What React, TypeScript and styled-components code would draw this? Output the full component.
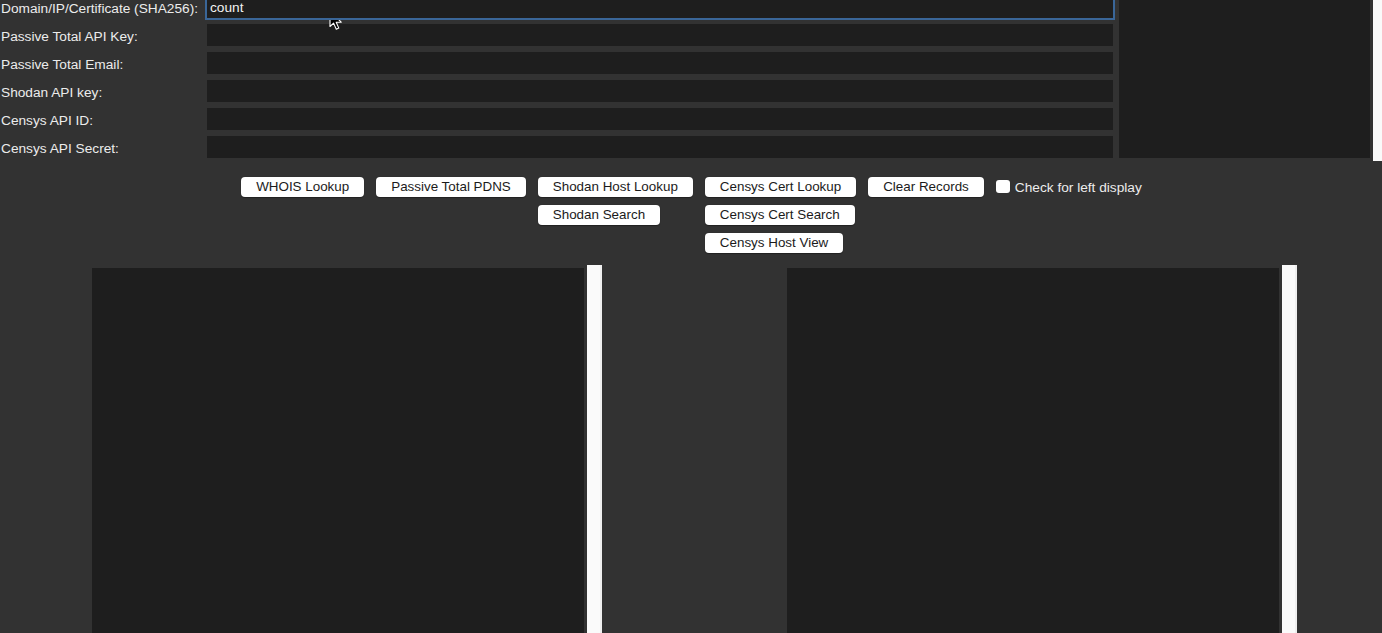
import React from "react";
import styled, { createGlobalStyle } from "styled-components";

const Global = createGlobalStyle`
  html, body { margin: 0; padding: 0; background: #323232; }
  body { font-family: "Liberation Sans", Arial, sans-serif; font-size: 13px; }
  * { box-sizing: border-box; }
`;

const Page = styled.div`
  position: relative;
  width: 1382px;
  height: 633px;
  overflow: hidden;
  background: #323232;
  color: #ececec;
`;

const TopFrame = styled.div`
  display: flex;
  align-items: flex-start;
  height: 161px;
  overflow: hidden;
`;

const Form = styled.div`
  flex: none;
  display: grid;
  grid-template-columns: 207px 906px;
  grid-auto-rows: 28px;
  margin-top: -7px;
`;

const Label = styled.div`
  display: flex;
  align-items: center;
  padding-left: 1px;
  padding-top: 3px;
  color: #ececec;
  white-space: nowrap;
  font-size: 13.7px;
  line-height: 16px;
`;

const Field = styled.div<{ $focused?: boolean }>`
  margin: 3px 0;
  height: 22px;
  background: #1e1e1e;
  color: #f2f2f2;
  display: flex;
  align-items: center;
  padding-left: 3px;
  font-size: 13.7px;
  box-shadow: ${(p) => (p.$focused ? "0 0 0 2px #3a6698" : "none")};
  position: relative;
  z-index: ${(p) => (p.$focused ? 1 : 0)};
`;

const SideText = styled.div`
  flex: none;
  margin-left: 6px;
  width: 251px;
  height: 158px;
  background: #1e1e1e;
`;

const Scrollbar = styled.div<{ $h: number }>`
  margin-left: 3px;
  width: 15px;
  flex: none;
  height: ${(p) => p.$h}px;
  background: #fafafa;
  border-right: 2px solid #efefef;
`;

const ButtonGrid = styled.div`
  display: grid;
  grid-template-columns: repeat(6, auto);
  grid-auto-rows: 20px;
  column-gap: 12px;
  row-gap: 8px;
  justify-content: center;
  justify-items: start;
  margin-top: 16px;
  padding-left: 1px;
`;

const Btn = styled.button<{ $col: number; $row: number }>`
  grid-column: ${(p) => p.$col};
  grid-row: ${(p) => p.$row};
  height: 20px;
  padding: 0 15px;
  border: none;
  border-radius: 4px;
  background: #ffffff;
  color: #1b1b1b;
  font-family: "Liberation Sans", Arial, sans-serif;
  font-size: 13.4px;
  line-height: 20px;
  white-space: nowrap;
  box-shadow: 0 0.5px 1px rgba(0, 0, 0, 0.35);
`;

const CheckWrap = styled.label`
  grid-column: 6;
  grid-row: 1;
  display: flex;
  align-items: center;
  gap: 5px;
  height: 20px;
  color: #ececec;
  white-space: nowrap;
  font-size: 13.7px;
`;

const CheckBox = styled.span`
  flex: none;
  width: 14px;
  height: 13px;
  border-radius: 3px;
  background: #ffffff;
  margin-top: -2px;
`;

const Bottom = styled.div`
  display: flex;
  gap: 185px;
  padding-left: 92px;
  margin-top: 12px;
`;

const TextPanel = styled.div`
  display: flex;
  align-items: flex-start;
  flex: none;
`;

const TextArea = styled.div`
  flex: none;
  width: 492px;
  height: 400px;
  margin-top: 3px;
  background: #1e1e1e;
`;

const Cursor = styled.svg`
  position: absolute;
  left: 328px;
  top: 9px;
  pointer-events: none;
`;

const buttons: { label: string; col: number; row: number }[] = [
  { label: "WHOIS Lookup", col: 1, row: 1 },
  { label: "Passive Total PDNS", col: 2, row: 1 },
  { label: "Shodan Host Lookup", col: 3, row: 1 },
  { label: "Shodan Search", col: 3, row: 2 },
  { label: "Censys Cert Lookup", col: 4, row: 1 },
  { label: "Censys Cert Search", col: 4, row: 2 },
  { label: "Censys Host View", col: 4, row: 3 },
  { label: "Clear Records", col: 5, row: 1 },
];

const fields = [
  { label: "Domain/IP/Certificate (SHA256):", value: "count", focused: true },
  { label: "Passive Total API Key:", value: "" },
  { label: "Passive Total Email:", value: "" },
  { label: "Shodan API key:", value: "" },
  { label: "Censys API ID:", value: "" },
  { label: "Censys API Secret:", value: "" },
];

export default function App() {
  return (
    <Page>
      <Global />
      <TopFrame>
        <Form>
          {fields.map((f) => (
            <React.Fragment key={f.label}>
              <Label>{f.label}</Label>
              <Field $focused={f.focused}>{f.value}</Field>
            </React.Fragment>
          ))}
        </Form>
        <SideText />
        <Scrollbar $h={161} />
      </TopFrame>
      <ButtonGrid>
        {buttons.map((b) => (
          <Btn key={b.label} $col={b.col} $row={b.row}>
            {b.label}
          </Btn>
        ))}
        <CheckWrap>
          <CheckBox />
          Check for left display
        </CheckWrap>
      </ButtonGrid>
      <Bottom>
        <TextPanel>
          <TextArea />
          <Scrollbar $h={400} />
        </TextPanel>
        <TextPanel>
          <TextArea />
          <Scrollbar $h={400} />
        </TextPanel>
      </Bottom>
      <Cursor width="15" height="22" viewBox="0 0 15 22">
        <path
          d="M2 2 L2 17.5 L5.6 14.1 L8.3 20.2 L10.8 19.1 L8.2 13.2 L13.2 13.2 Z"
          fill="#000"
          stroke="#fff"
          strokeWidth="1.1"
          strokeLinejoin="round"
        />
      </Cursor>
    </Page>
  );
}
